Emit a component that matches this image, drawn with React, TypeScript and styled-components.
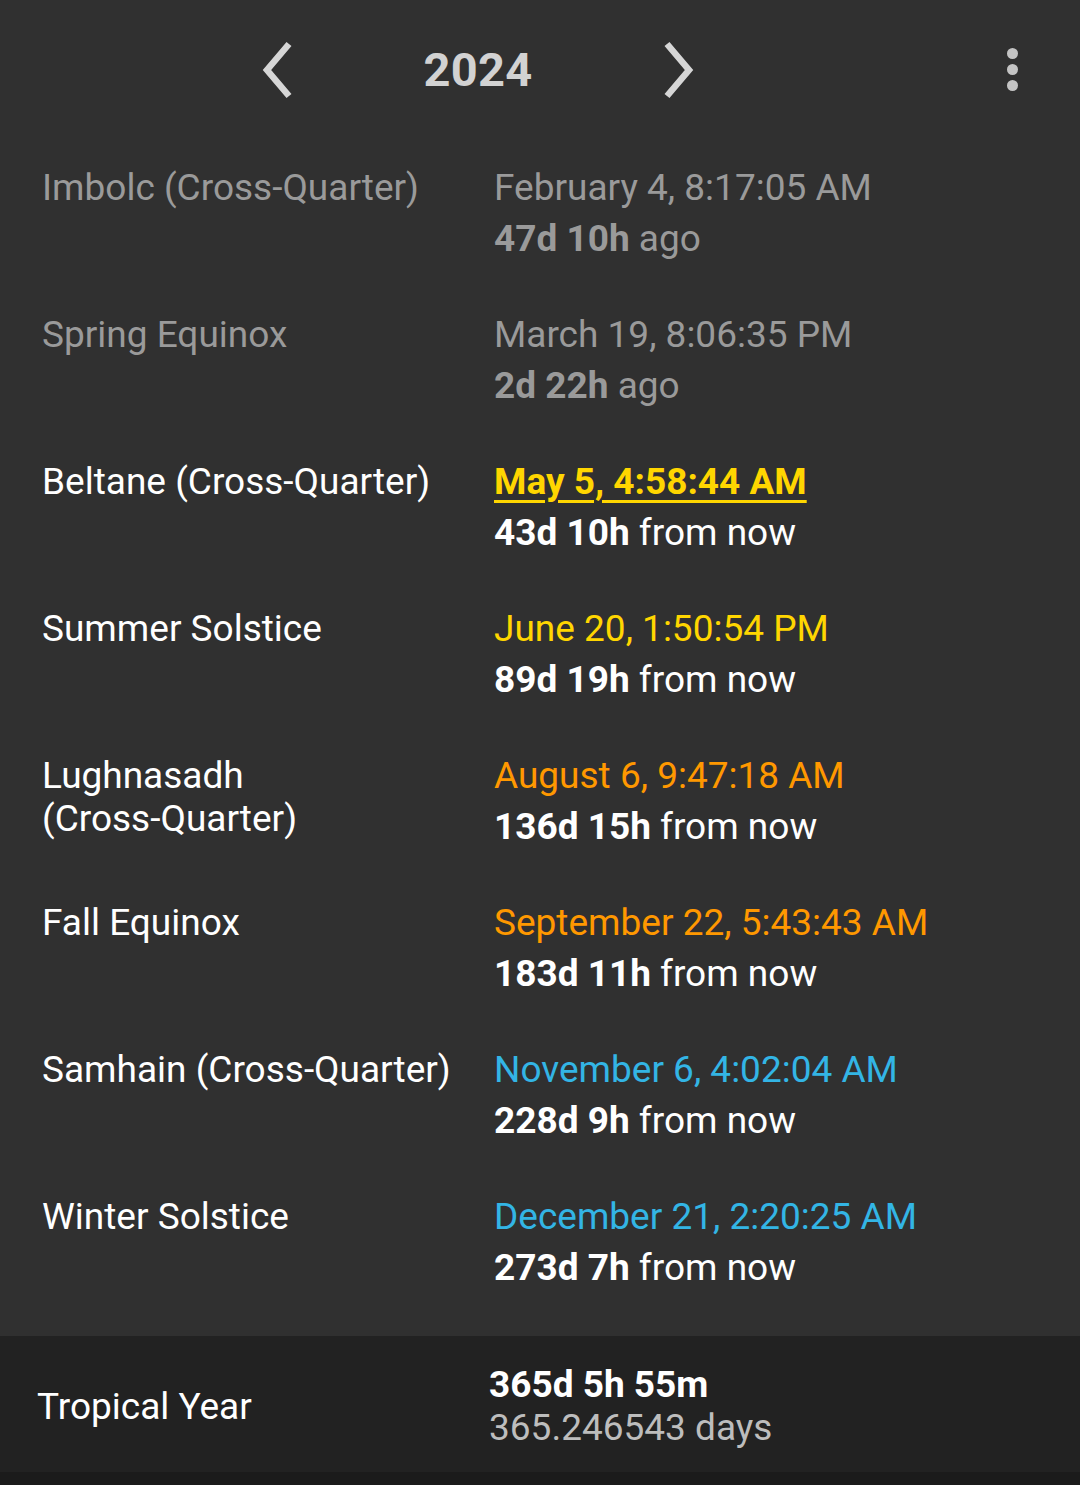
import styled, { createGlobalStyle } from "styled-components"

const GlobalStyle = createGlobalStyle`
    html, body {
        margin: 0;
        padding: 0;
        background: #303030;
    }
    body {
        font-family: Roboto, "Noto Sans", sans-serif;
        -webkit-font-smoothing: antialiased;
    }
`

const Page = styled.div`
    width: 1080px;
    min-height: 1485px;
    display: flex;
    flex-direction: column;
    background: #303030;
`

const Header = styled.div`
    height: 139px;
    display: flex;
    align-items: center;
    padding-right: 12px;
`

const YearNav = styled.div`
    flex: 1;
    display: flex;
    justify-content: center;
    align-items: center;
`

const NavButton = styled.div`
    width: 96px;
    height: 96px;
    display: flex;
    align-items: center;
    justify-content: center;
`

const Year = styled.div`
    width: 304px;
    text-align: center;
    font-size: 47px;
    font-weight: 700;
    color: #d2d2d2;
    letter-spacing: 0.3px;
`

const MenuButton = styled.div`
    width: 112px;
    height: 96px;
    display: flex;
    flex-direction: column;
    align-items: center;
    justify-content: center;
    gap: 5px;
`

const Dot = styled.span`
    width: 11px;
    height: 11px;
    border-radius: 50%;
    background: #c4c4c4;
`

const List = styled.div`
    padding-bottom: 21px;
`

const Row = styled.div`
    display: grid;
    grid-template-columns: 428px 1fr;
    column-gap: 24px;
    padding: 26.5px 20px 26.5px 42px;
    font-size: 37px;
    line-height: 43px;
`

const Label = styled.div<{ $past?: boolean }>`
    color: ${p => (p.$past ? "#9a9a9a" : "#ffffff")};
    span {
        white-space: nowrap;
    }
`

const DateText = styled.div<{ $color: string; $current?: boolean }>`
    color: ${p => p.$color};
    font-weight: ${p => (p.$current ? 700 : 400)};
    text-decoration: ${p => (p.$current ? "underline" : "none")};
    text-underline-offset: 6px;
    text-decoration-thickness: 3px;
`

const Delta = styled.div<{ $past?: boolean }>`
    margin-top: 8px;
    color: ${p => (p.$past ? "#9a9a9a" : "#ffffff")};
    b {
        font-weight: 700;
    }
`

const Footer = styled.div`
    height: 136px;
    background: #222222;
    display: grid;
    grid-template-columns: 428px 1fr;
    column-gap: 24px;
    align-items: center;
    padding: 4px 20px 0 37px;
    box-sizing: border-box;
    margin-top: auto;
    font-size: 37px;
    line-height: 43px;
    color: #ffffff;
`

const FooterValue = styled.div`
    b {
        font-weight: 700;
    }
`

const FooterSub = styled.div`
    color: #bdbdbd;
`

const BottomStrip = styled.div`
    height: 13px;
    background: #1b1b1b;
`

const Chevron = ({ dir }: { dir: "left" | "right" }) => (
    <svg width="40" height="60" viewBox="0 0 40 60">
        <path
            d={dir === "left" ? "M31 4 L9 30 L31 56" : "M9 4 L31 30 L9 56"}
            fill="none"
            stroke="#d6d6d6"
            strokeWidth="6.5"
            strokeLinecap="butt"
            strokeLinejoin="miter"
        />
    </svg>
)

type Event = {
    name: string
    note?: string
    date: string
    delta: string
    suffix: string
    color: string
    past?: boolean
    current?: boolean
}

const events: Event[] = [
    { name: "Imbolc", note: "(Cross-Quarter)", date: "February 4, 8:17:05 AM", delta: "47d 10h", suffix: "ago", color: "#9a9a9a", past: true },
    { name: "Spring Equinox", date: "March 19, 8:06:35 PM", delta: "2d 22h", suffix: "ago", color: "#9a9a9a", past: true },
    { name: "Beltane", note: "(Cross-Quarter)", date: "May 5, 4:58:44 AM", delta: "43d 10h", suffix: "from now", color: "#ffd600", current: true },
    { name: "Summer Solstice", date: "June 20, 1:50:54 PM", delta: "89d 19h", suffix: "from now", color: "#ffd600" },
    { name: "Lughnasadh", note: "(Cross-Quarter)", date: "August 6, 9:47:18 AM", delta: "136d 15h", suffix: "from now", color: "#ff9800" },
    { name: "Fall Equinox", date: "September 22, 5:43:43 AM", delta: "183d 11h", suffix: "from now", color: "#ff9800" },
    { name: "Samhain", note: "(Cross-Quarter)", date: "November 6, 4:02:04 AM", delta: "228d 9h", suffix: "from now", color: "#33b5e5" },
    { name: "Winter Solstice", date: "December 21, 2:20:25 AM", delta: "273d 7h", suffix: "from now", color: "#33b5e5" },
]

const App = () => {
    return (
        <Page>
            <GlobalStyle />
            <Header>
                <YearNav>
                    <NavButton><Chevron dir="left" /></NavButton>
                    <Year>2024</Year>
                    <NavButton><Chevron dir="right" /></NavButton>
                </YearNav>
                <MenuButton>
                    <Dot />
                    <Dot />
                    <Dot />
                </MenuButton>
            </Header>
            <List>
                {events.map(e => (
                    <Row key={e.name}>
                        <Label $past={e.past}>
                            {e.name}
                            {e.note && <> <span>{e.note}</span></>}
                        </Label>
                        <div>
                            <DateText $color={e.color} $current={e.current}>{e.date}</DateText>
                            <Delta $past={e.past}><b>{e.delta}</b> {e.suffix}</Delta>
                        </div>
                    </Row>
                ))}
            </List>
            <Footer>
                <div>Tropical Year</div>
                <FooterValue>
                    <b>365d 5h 55m</b>
                    <FooterSub>365.246543 days</FooterSub>
                </FooterValue>
            </Footer>
            <BottomStrip />
        </Page>
    )
}

export default App
